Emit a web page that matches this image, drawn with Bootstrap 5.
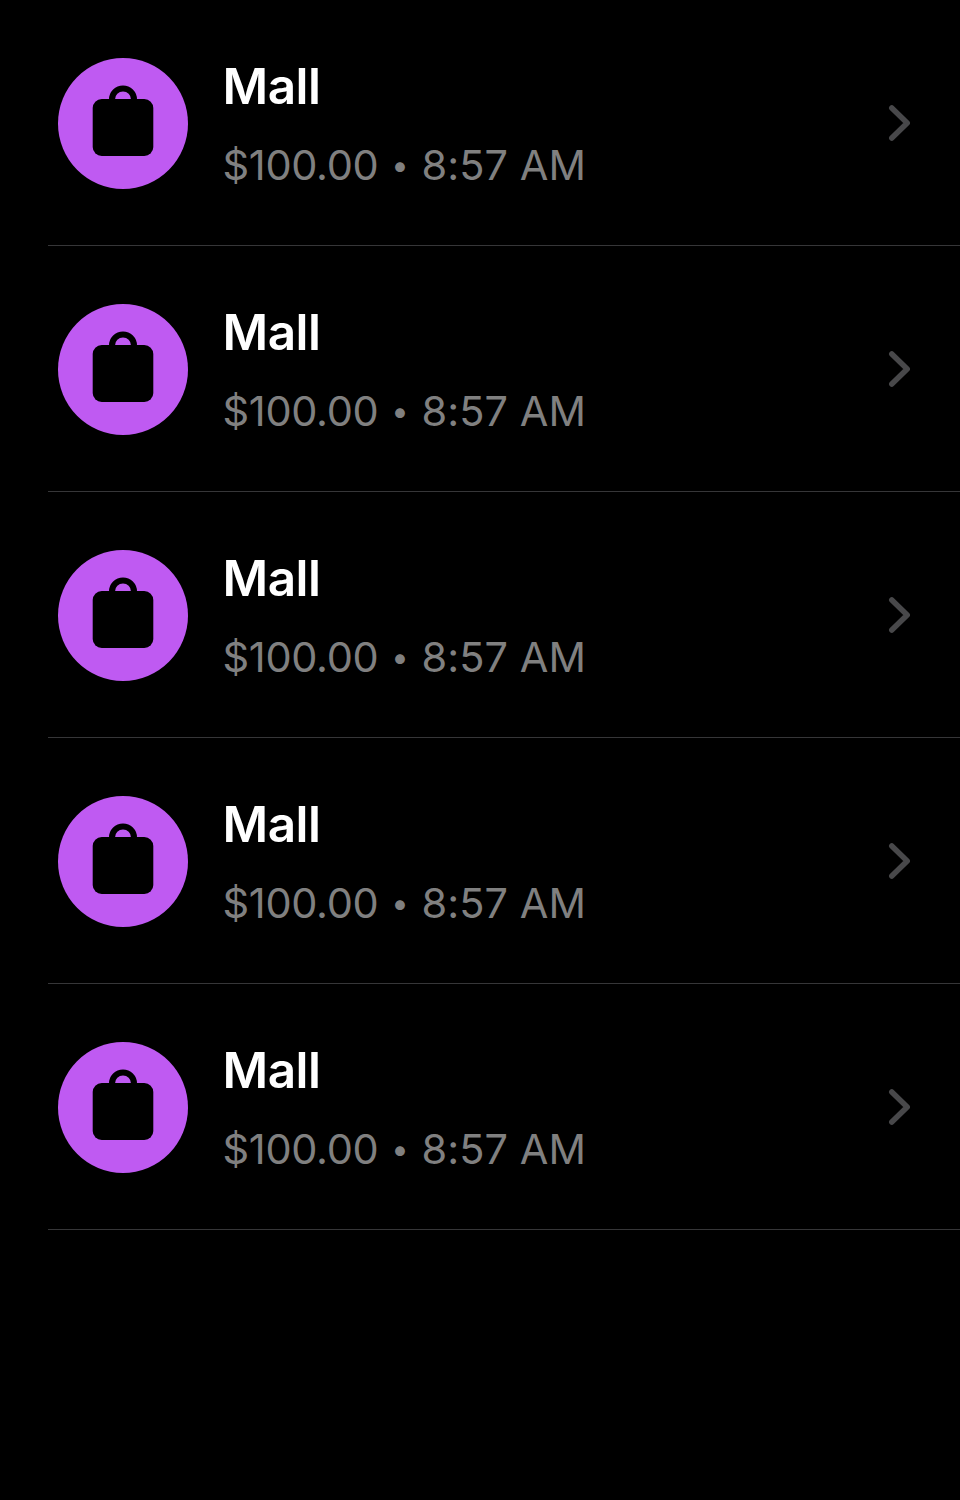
<!DOCTYPE html>
<html lang="en">
<head>
<meta charset="utf-8">
<meta name="viewport" content="width=device-width, initial-scale=1">
<title>Transactions</title>
<link href="https://cdn.jsdelivr.net/npm/bootstrap@5.3.0/dist/css/bootstrap.min.css" rel="stylesheet">
<style>
body { background: #000; font-family: Inter, "Liberation Sans", sans-serif; min-height: 100vh; }
.tx-list { margin-left: 48px; }
.tx-row { height: 246px; border-bottom: 1px solid #363638; padding: 0 46px 0 10px; color: #fff; }
.tx-icon { width: 130px; height: 131px; margin-right: 34.5px; margin-top: 2px; }
.tx-title { font-size: 49.5px; font-weight: 570; line-height: 60px; letter-spacing: -.5px; }
.tx-meta { font-size: 41.5px; line-height: 50px; color: #808080; margin-top: 24px; }
.tx-amount { width: 156px; letter-spacing: -.3px; }
.tx-dot { width: 43px; font-size: 31px; text-align: center; }
.tx-time { letter-spacing: .05px; }
.tx-chevron { width: 30px; height: 42px; }
</style>
</head>
<body>
<svg class="d-none" xmlns="http://www.w3.org/2000/svg">
  <symbol id="bag" viewBox="0 0 130 131">
    <ellipse cx="65" cy="65.5" rx="65" ry="65.5" fill="#bf5af2"/>
    <rect x="34.700" y="41" width="60.600" height="57" rx="9" fill="#000"/>
    <path d="M54 43v-1.500a11 11 0 0 1 22 0V43" fill="none" stroke="#000" stroke-width="6"/>
  </symbol>
  <symbol id="chevron" viewBox="0 0 30 42">
    <path d="M7.800 6 23.200 21 7.800 36" fill="none" stroke="#48484a" stroke-width="5.500" stroke-linecap="round" stroke-linejoin="round"/>
  </symbol>
</svg>
<main class="tx-list">
  <a class="tx-row d-flex align-items-center text-decoration-none" href="#">
    <svg class="tx-icon flex-shrink-0"><use href="#bag"/></svg>
    <div class="flex-grow-1"><div class="tx-title">Mall</div><div class="tx-meta d-flex text-nowrap"><span class="tx-amount">$100.00</span><span class="tx-dot">•</span><span class="tx-time">8:57 AM</span></div></div>
    <svg class="tx-chevron flex-shrink-0"><use href="#chevron"/></svg>
  </a>
  <a class="tx-row d-flex align-items-center text-decoration-none" href="#">
    <svg class="tx-icon flex-shrink-0"><use href="#bag"/></svg>
    <div class="flex-grow-1"><div class="tx-title">Mall</div><div class="tx-meta d-flex text-nowrap"><span class="tx-amount">$100.00</span><span class="tx-dot">•</span><span class="tx-time">8:57 AM</span></div></div>
    <svg class="tx-chevron flex-shrink-0"><use href="#chevron"/></svg>
  </a>
  <a class="tx-row d-flex align-items-center text-decoration-none" href="#">
    <svg class="tx-icon flex-shrink-0"><use href="#bag"/></svg>
    <div class="flex-grow-1"><div class="tx-title">Mall</div><div class="tx-meta d-flex text-nowrap"><span class="tx-amount">$100.00</span><span class="tx-dot">•</span><span class="tx-time">8:57 AM</span></div></div>
    <svg class="tx-chevron flex-shrink-0"><use href="#chevron"/></svg>
  </a>
  <a class="tx-row d-flex align-items-center text-decoration-none" href="#">
    <svg class="tx-icon flex-shrink-0"><use href="#bag"/></svg>
    <div class="flex-grow-1"><div class="tx-title">Mall</div><div class="tx-meta d-flex text-nowrap"><span class="tx-amount">$100.00</span><span class="tx-dot">•</span><span class="tx-time">8:57 AM</span></div></div>
    <svg class="tx-chevron flex-shrink-0"><use href="#chevron"/></svg>
  </a>
  <a class="tx-row d-flex align-items-center text-decoration-none" href="#">
    <svg class="tx-icon flex-shrink-0"><use href="#bag"/></svg>
    <div class="flex-grow-1"><div class="tx-title">Mall</div><div class="tx-meta d-flex text-nowrap"><span class="tx-amount">$100.00</span><span class="tx-dot">•</span><span class="tx-time">8:57 AM</span></div></div>
    <svg class="tx-chevron flex-shrink-0"><use href="#chevron"/></svg>
  </a>
</main>
<script src="https://cdn.jsdelivr.net/npm/bootstrap@5.3.0/dist/js/bootstrap.bundle.min.js"></script>
</body>
</html>
